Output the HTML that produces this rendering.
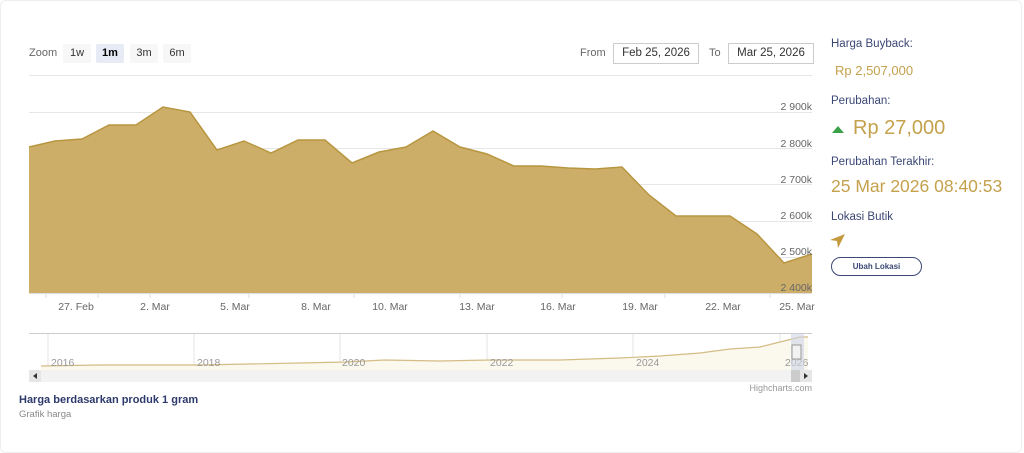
<!DOCTYPE html>
<html><head><meta charset="utf-8"><style>
body{margin:0;width:1024px;height:453px;background:#fff;font-family:"Liberation Sans",sans-serif;overflow:hidden;position:relative}
.card{position:absolute;left:0;top:0;width:1020px;height:451px;border:1px solid #eee;border-radius:6px}
.t{position:absolute;white-space:nowrap}
.lab{color:#3b4775;font-size:11.5px}
.gold{color:#c4a14c}
.btn{position:absolute;top:44px;height:19px;line-height:19px;font-size:11px;color:#333;background:#f7f7f7;text-align:center;border-radius:2px}
.inp{position:absolute;top:43px;height:19px;line-height:19px;border:1px solid #ccc;font-size:11.5px;color:#333;text-align:center}
</style></head><body>
<div class="card"></div>
<div class="t" style="left:29px;top:47px;font-size:11px;color:#666">Zoom</div>
<div class="btn" style="left:63px;width:28px">1w</div>
<div class="btn" style="left:96px;width:28px;background:#e6ebf5;font-weight:bold;color:#000">1m</div>
<div class="btn" style="left:130px;width:28px">3m</div>
<div class="btn" style="left:163px;width:28px">6m</div>
<div class="t" style="left:580px;top:47px;font-size:11px;color:#666">From</div>
<div class="inp" style="left:613px;width:84px">Feb 25, 2026</div>
<div class="t" style="left:709px;top:47px;font-size:11px;color:#666">To</div>
<div class="inp" style="left:728px;width:84px">Mar 25, 2026</div>
<svg style="position:absolute;left:0;top:0" width="1024" height="453">
<g stroke="#e6e6e6" stroke-width="1">
<line x1="29" x2="812" y1="75.5" y2="75.5"/><line x1="29" x2="812" y1="112.5" y2="112.5"/><line x1="29" x2="812" y1="148.5" y2="148.5"/><line x1="29" x2="812" y1="184.5" y2="184.5"/><line x1="29" x2="812" y1="221.5" y2="221.5"/><line x1="29" x2="812" y1="257.5" y2="257.5"/>
</g>
<path d="M29,147 L55,141 82,139 109,125 136,125 163,107 190,112 217,150 244,141 271,153 298,140 325,140 352,163 379,152 406,147 433,131 460,147 487,154 514,166 541,166 568,168 595,169 622,167 649,195 676,216 703,216 730,216 757,234 784,263 812,254 L812,293 L29,293Z" fill="#cdae69"/>
<path d="M29,147 L55,141 82,139 109,125 136,125 163,107 190,112 217,150 244,141 271,153 298,140 325,140 352,163 379,152 406,147 433,131 460,147 487,154 514,166 541,166 568,168 595,169 622,167 649,195 676,216 703,216 730,216 757,234 784,263 812,254" fill="none" stroke="#b8963f" stroke-width="1.5"/>
<g font-size="10.5" fill="#666" text-anchor="end" font-family="Liberation Sans">
<text x="812" y="110">2 900k</text><text x="812" y="147">2 800k</text><text x="812" y="183">2 700k</text><text x="812" y="219">2 600k</text><text x="812" y="255">2 500k</text><text x="812" y="291">2 400k</text>
</g>
<g stroke="#ddd"><line x1="29" x2="812" y1="293.5" y2="293.5"/>
<line x1="46" x2="46" y1="293" y2="298"/><line x1="98" x2="98" y1="293" y2="298"/><line x1="150" x2="150" y1="293" y2="298"/><line x1="249" x2="249" y1="293" y2="298"/><line x1="354" x2="354" y1="293" y2="298"/><line x1="460" x2="460" y1="293" y2="298"/><line x1="562" x2="562" y1="293" y2="298"/><line x1="665" x2="665" y1="293" y2="298"/><line x1="770" x2="770" y1="293" y2="298"/></g>
<g font-size="10.5" fill="#666" text-anchor="middle" font-family="Liberation Sans">
<text x="76" y="310">27. Feb</text><text x="155" y="310">2. Mar</text><text x="235" y="310">5. Mar</text><text x="316" y="310">8. Mar</text><text x="390" y="310">10. Mar</text><text x="477" y="310">13. Mar</text><text x="558" y="310">16. Mar</text><text x="640" y="310">19. Mar</text><text x="723" y="310">22. Mar</text><text x="797" y="310">25. Mar</text>
</g>
<line x1="29" x2="812" y1="333.5" y2="333.5" stroke="#ccc"/>
<g stroke="#e6e6e6"><line x1="48" x2="48" y1="334" y2="370"/><line x1="194" x2="194" y1="334" y2="370"/><line x1="340" x2="340" y1="334" y2="370"/><line x1="487" x2="487" y1="334" y2="370"/><line x1="633" x2="633" y1="334" y2="370"/><line x1="780" x2="780" y1="334" y2="370"/></g>
<path d="M41,366 L100,365 200,365 300,363 345,362 385,360 440,361 490,360 560,360 620,358 660,356 700,353 730,349 760,347 780,342 800,337 808,337 L808,370 L41,370Z" fill="#fbf8ee"/>
<path d="M41,366 L100,365 200,365 300,363 345,362 385,360 440,361 490,360 560,360 620,358 660,356 700,353 730,349 760,347 780,342 800,337 808,337" fill="none" stroke="#d4bc85" stroke-width="1.2"/>
<g font-size="10.5" fill="#999" font-family="Liberation Sans"><text x="51" y="366">2016</text><text x="197" y="366">2018</text><text x="342" y="366">2020</text><text x="490" y="366">2022</text><text x="636" y="366">2024</text><text x="785" y="366">2026</text></g>
<rect x="791" y="334" width="13" height="36" fill="#cfd6e6" opacity=".6"/>
<rect x="792" y="345" width="9" height="14" fill="#f2f2f2" stroke="#999"/>
<rect x="29" y="370" width="783" height="12" fill="#f2f2f2"/>
<rect x="29" y="370" width="12" height="12" fill="#e6e6e6"/><rect x="800" y="370" width="12" height="12" fill="#e6e6e6"/>
<rect x="791" y="370" width="9" height="12" fill="#ccc"/>
<path d="M37,373 L33,376 37,379Z" fill="#333"/><path d="M804,373 L808,376 804,379Z" fill="#333"/>
<text x="812" y="391" font-size="9" fill="#999" text-anchor="end" font-family="Liberation Sans">Highcharts.com</text>
<path d="M832,133 L838,126 844,133Z" fill="#3aa14a"/>
<path d="M845,234 L830,240 837,241 838,248Z" fill="#c49a3d"/>
</svg>
<div class="t" style="left:19px;top:394px;font-size:11px;font-weight:bold;color:#2d3a6b">Harga berdasarkan produk 1 gram</div>
<div class="t" style="left:19px;top:409px;font-size:9.5px;color:#888">Grafik harga</div>
<div class="t lab" style="left:831px;top:38px">Harga Buyback:</div>
<div class="t gold" style="left:835px;top:63px;font-size:13px">Rp 2,507,000</div>
<div class="t lab" style="left:831px;top:95px">Perubahan:</div>
<div class="t gold" style="left:853px;top:117px;font-size:20px">Rp 27,000</div>
<div class="t lab" style="left:831px;top:156px">Perubahan Terakhir:</div>
<div class="t gold" style="left:831px;top:176px;font-size:17.5px">25 Mar 2026 08:40:53</div>
<div class="t lab" style="left:831px;top:211px">Lokasi Butik</div>
<div class="t" style="left:831px;top:257px;width:89px;height:17px;border:1.5px solid #3b4775;border-radius:10px;font-size:8px;font-weight:bold;color:#3b4775;text-align:center;line-height:17px">Ubah Lokasi</div>
</body></html>
